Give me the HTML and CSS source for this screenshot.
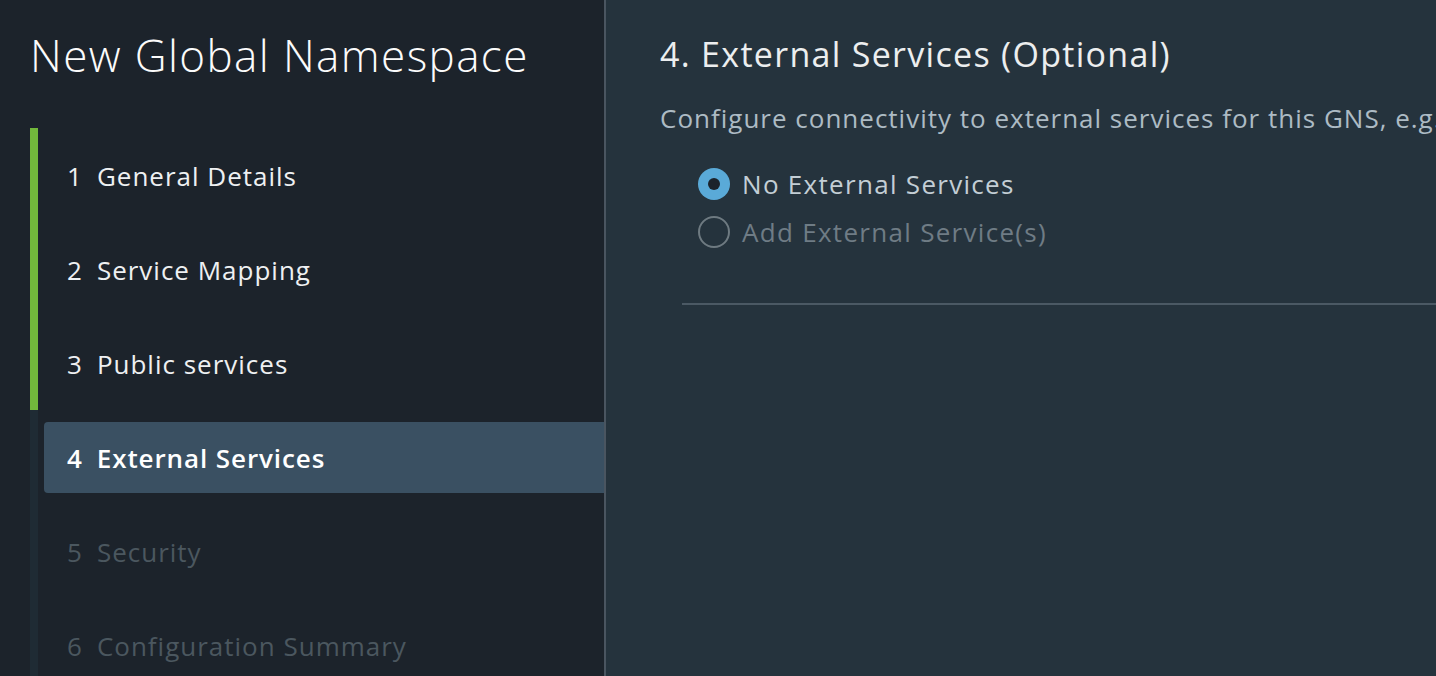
FILE: index.html
```html
<!DOCTYPE html>
<html lang="en">
<head>
<meta charset="utf-8">
<title>New Global Namespace</title>
<link rel="stylesheet" href="styles.css">
</head>
<body>
<div class="wizard">
  <aside class="sidebar">
    <h1 class="title">New Global Namespace</h1>
    <ol class="steps">
      <li class="step done"><div class="step-inner"><span class="num">1</span><span class="label">General Details</span></div></li>
      <li class="step done"><div class="step-inner"><span class="num">2</span><span class="label">Service Mapping</span></div></li>
      <li class="step done"><div class="step-inner"><span class="num">3</span><span class="label">Public services</span></div></li>
      <li class="step active"><div class="step-inner"><span class="num">4</span><span class="label">External Services</span></div></li>
      <li class="step disabled"><div class="step-inner"><span class="num">5</span><span class="label">Security</span></div></li>
      <li class="step disabled"><div class="step-inner"><span class="num">6</span><span class="label">Configuration Summary</span></div></li>
    </ol>
  </aside>
  <main class="content">
    <h2 class="heading">4. External Services (Optional)</h2>
    <p class="desc">Configure connectivity to external services for this GNS, e.g.</p>
    <div class="radios">
      <label class="radio">
        <span class="dot checked"></span>
        <span class="radio-label">No External Services</span>
      </label>
      <label class="radio off">
        <span class="dot"></span>
        <span class="radio-label">Add External Service(s)</span>
      </label>
    </div>
    <hr class="divider">
  </main>
</div>
</body>
</html>
```

FILE: styles.css
```css
* { box-sizing: border-box; }
html, body {
  margin: 0;
  padding: 0;
  height: 100%;
  overflow: hidden;
  background: #25333d;
  font-family: "Open Sans", Lato, sans-serif;
}
.wizard {
  display: flex;
  height: 676px;
}
.sidebar {
  width: 606px;
  flex: none;
  background: #1c232b;
  border-right: 2px solid #4a5560;
  padding-left: 30px;
}
.title {
  margin: 0;
  padding-top: 27px;
  height: 128px;
  font-size: 44px;
  line-height: 56px;
  font-weight: 300;
  color: #fbfbfb;
  letter-spacing: 1.4px;
}
.steps {
  list-style: none;
  margin: 0;
  padding: 0;
}
.step {
  height: 94px;
  border-left: 8px solid #1f2b34;
  padding: 12px 0 11px 6px;
  display: flex;
}
.step.done { border-left-color: #72b83c; }
.step-inner {
  flex: 1;
  display: flex;
  align-items: center;
  padding-left: 23px;
  border-radius: 4px 0 0 4px;
  font-size: 26px;
  font-weight: 400;
  color: #eef0f2;
  letter-spacing: 1px;
}
.num { margin-right: 14px; }
.step.active .step-inner {
  background: #3a5062;
  color: #ffffff;
  font-weight: 600;
  letter-spacing: 0.9px;
}
.step.disabled .step-inner { color: #4b575f; }
.content {
  flex: 1;
  min-width: 0;
  padding-left: 54px;
  overflow: hidden;
}
.heading {
  margin: 0;
  padding-top: 32px;
  font-size: 34px;
  line-height: 44px;
  font-weight: 400;
  color: #eceeef;
  white-space: nowrap;
  letter-spacing: 1.3px;
}
.desc {
  margin: 0;
  padding-top: 22px;
  font-size: 26px;
  line-height: 40px;
  font-weight: 400;
  color: #adbbc4;
  white-space: nowrap;
  letter-spacing: 1px;
}
.radios {
  display: flex;
  flex-direction: column;
  gap: 16px;
  padding: 30px 0 0 38px;
}
.radio {
  display: flex;
  align-items: center;
  gap: 12px;
  height: 32px;
  font-size: 26px;
  color: #c3ced5;
  letter-spacing: 1.3px;
}
.radio.off { color: #6f7c85; }
.dot {
  width: 32px;
  height: 32px;
  border-radius: 50%;
  border: 2px solid #6e7a81;
  flex: none;
  display: flex;
  align-items: center;
  justify-content: center;
}
.dot.checked {
  border: none;
  background: #5aaad8;
}
.dot.checked::after {
  content: "";
  width: 12px;
  height: 12px;
  border-radius: 50%;
  background: #1c232b;
}
.divider {
  margin: 55px 0 0 22px;
  border: none;
  height: 2px;
  background: #4b5964;
}
```
